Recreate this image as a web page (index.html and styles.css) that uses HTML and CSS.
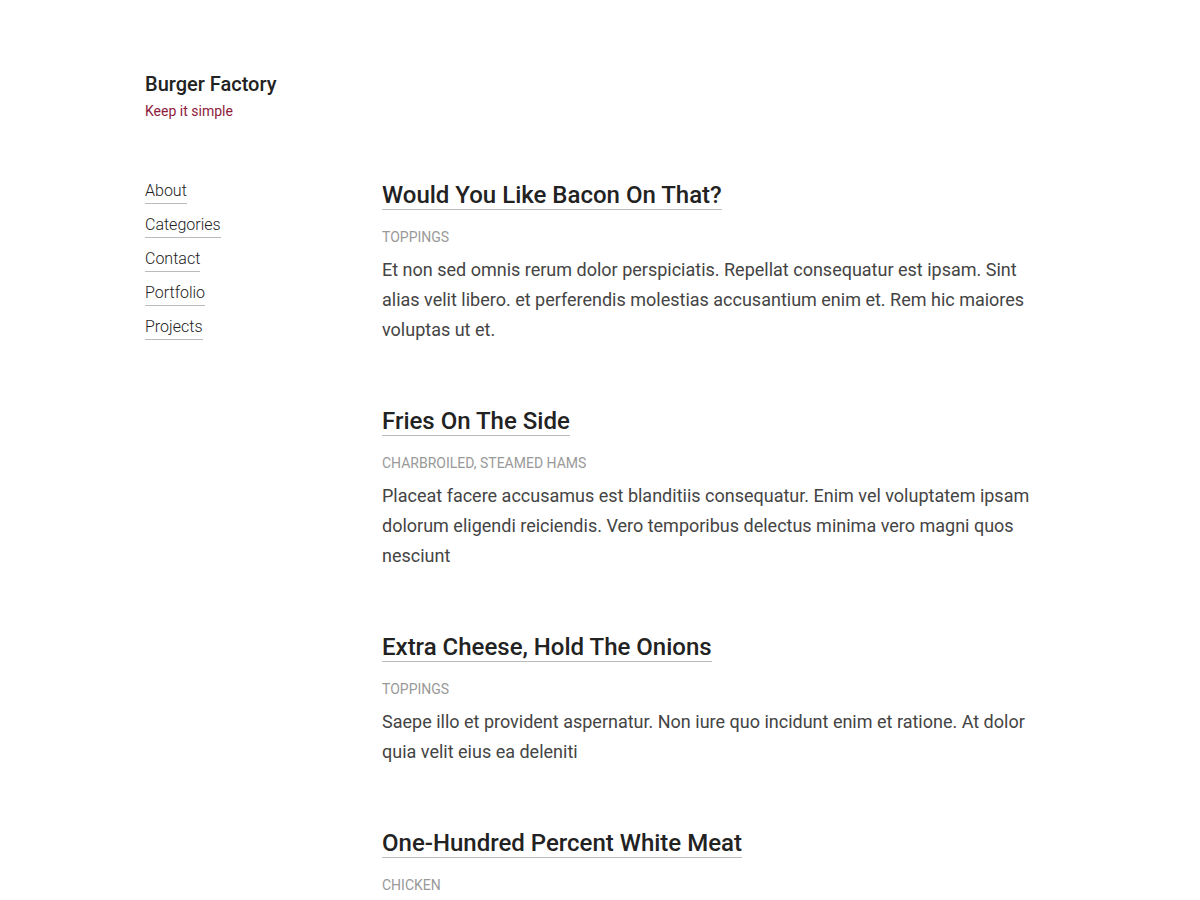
FILE: index.html
```html
<!DOCTYPE html>
<html lang="en">
<head>
<meta charset="utf-8">
<title>Burger Factory</title>
<link rel="stylesheet" href="styles.css">
</head>
<body>
<div class="page">
  <header class="site-header">
    <h1 class="site-title">Burger Factory</h1>
    <p class="tagline">Keep it simple</p>
  </header>
  <div class="layout">
    <nav class="side-nav">
      <a href="#">About</a>
      <a href="#">Categories</a>
      <a href="#">Contact</a>
      <a href="#">Portfolio</a>
      <a href="#">Projects</a>
    </nav>
    <main class="posts">
      <article class="post">
        <h2 class="post-title"><a href="#">Would You Like Bacon On That?</a></h2>
        <div class="post-cats">Toppings</div>
        <p class="post-body">Et non sed omnis rerum dolor perspiciatis. Repellat consequatur est ipsam. Sint alias velit libero. et perferendis molestias accusantium enim et. Rem hic maiores voluptas ut et.</p>
      </article>
      <article class="post">
        <h2 class="post-title"><a href="#">Fries On The Side</a></h2>
        <div class="post-cats">Charbroiled, Steamed Hams</div>
        <p class="post-body">Placeat facere accusamus est blanditiis consequatur. Enim vel voluptatem ipsam dolorum eligendi reiciendis. Vero temporibus delectus minima vero magni quos nesciunt</p>
      </article>
      <article class="post">
        <h2 class="post-title"><a href="#">Extra Cheese, Hold The Onions</a></h2>
        <div class="post-cats">Toppings</div>
        <p class="post-body">Saepe illo et provident aspernatur. Non iure quo incidunt enim et ratione. At dolor quia velit eius ea deleniti</p>
      </article>
      <article class="post">
        <h2 class="post-title"><a href="#">One-Hundred Percent White Meat</a></h2>
        <div class="post-cats">Chicken</div>
      </article>
    </main>
  </div>
</div>
</body>
</html>
```
FILE: styles.css
```css
html, body {
  margin: 0;
  padding: 0;
  background: #fff;
}
body {
  font-family: Roboto, "Liberation Sans", sans-serif;
  color: #444;
}
.page {
  width: 910px;
  margin: 0 auto;
  padding-top: 70px;
}
.site-header {
  margin-bottom: 57px;
}
.site-title {
  margin: 0;
  font-size: 20px;
  font-weight: 500;
  line-height: 28px;
  color: #222;
}
.tagline {
  margin: 1px 0 0;
  font-size: 14px;
  line-height: 24px;
  color: #8e1b3c;
}
.layout {
  display: grid;
  grid-template-columns: 237px 660px;
}
.side-nav {
  display: flex;
  flex-direction: column;
  align-items: flex-start;
  gap: 10px;
}
.side-nav a {
  font-size: 16px;
  font-weight: 300;
  line-height: 22px;
  color: #222;
  text-decoration: none;
  border-bottom: 1px solid #bbb;
  padding-bottom: 1px;
}
.posts {
  display: flex;
  flex-direction: column;
  gap: 61px;
}
.post-title {
  margin: 0;
  font-size: 24px;
  font-weight: 500;
  line-height: 30px;
}
.post-title a {
  color: #222;
  text-decoration: none;
  border-bottom: 1px solid #bbb;
  padding-bottom: 0;
}
.post-cats {
  margin-top: 18px;
  font-size: 14px;
  line-height: 18px;
  text-transform: uppercase;
  color: #999;
}
.post-body {
  margin: 9px 0 0;
  font-size: 18px;
  line-height: 30px;
  color: #444;
}
```
